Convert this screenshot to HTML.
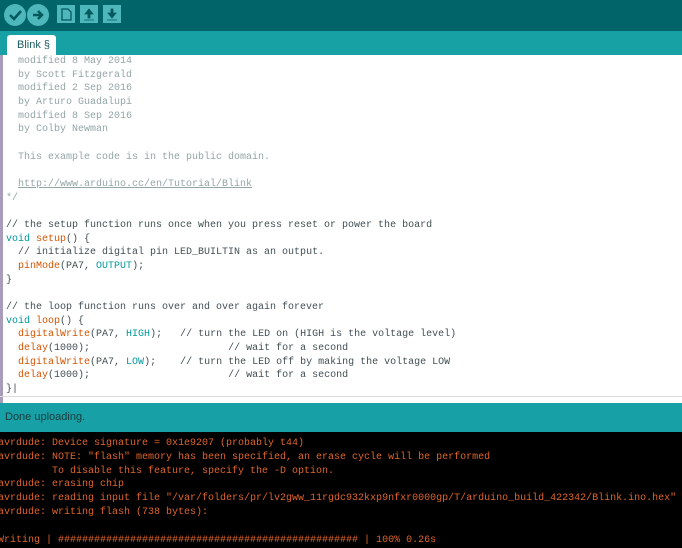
<!DOCTYPE html>
<html><head><style>
*{margin:0;padding:0;box-sizing:border-box}
body{width:682px;height:548px;overflow:hidden;position:relative;background:#fff;font-family:"Liberation Mono",monospace}
#tb{position:absolute;left:0;top:0;width:682px;height:31px;background:#006468}
.rb{position:absolute;top:4px;width:22px;height:22px;border-radius:50%;background:#4db7bb}
.sq{position:absolute;top:5px;width:18px;height:18px;background:#4db7bb}
#tabs{position:absolute;left:0;top:31px;width:682px;height:24px;background:#17a1a5}
#tab{position:absolute;left:7px;top:4px;width:49px;height:20px;background:#fff;border-radius:3px 3px 0 0;font:11px "Liberation Sans",sans-serif;color:#1d5d61;padding:4px 0 0 10px}
#strip{position:absolute;left:0;top:55px;width:3px;height:349px;background:#a89cba}
#code{position:absolute;left:6px;top:55px;font-size:10px;line-height:13.67px;white-space:pre;color:#434f54}
.h{color:#95a5a6}.k{color:#00979c}.f{color:#d35400}.c{color:#434f54}
#sep{position:absolute;left:0;top:396px;width:682px;height:1px;background:#ddd}
#st{position:absolute;left:0;top:403px;width:682px;height:29px;background:#17a0a5;font:11px "Liberation Sans",sans-serif;color:#1b3b3d;padding:8px 0 0 5px}
#con{position:absolute;left:0;top:432px;width:682px;height:116px;background:#000}
#ct{position:absolute;left:-2px;top:437px;font-size:10px;line-height:13.8px;white-space:pre;color:#e0652a}
</style></head><body>
<div id="tb">
<div class="rb" style="left:4px"><svg width="22" height="22"><path d="M6 11l4 4 7-8" stroke="#00595d" stroke-width="2.5" fill="none"/></svg></div>
<div class="rb" style="left:27px"><svg width="22" height="22"><path d="M6 11h9M11 7l4 4-4 4" stroke="#00595d" stroke-width="2.5" fill="none"/></svg></div>
<div class="sq" style="left:57px"><svg width="18" height="18"><path d="M5 4h6l3 3v8H5z" stroke="#00595d" stroke-width="1.3" fill="none"/></svg></div>
<div class="sq" style="left:80px"><svg width="18" height="18"><path d="M9 4l-4 5h3v4h2V9h3z M4 15h10" fill="#00595d" stroke="#00595d" stroke-width="0.8"/></svg></div>
<div class="sq" style="left:103px"><svg width="18" height="18"><path d="M9 13l-4-5h3V4h2v4h3z M4 15h10" fill="#00595d" stroke="#00595d" stroke-width="0.8"/></svg></div>
</div>
<div id="tabs"><div id="tab">Blink §</div></div>
<div id="strip"></div>
<div id="code"><span class="h">  modified 8 May 2014
  by Scott Fitzgerald
  modified 2 Sep 2016
  by Arturo Guadalupi
  modified 8 Sep 2016
  by Colby Newman

  This example code is in the public domain.

  <u>http://www.arduino.cc/en/Tutorial/Blink</u>
*/</span>

<span class="c">// the setup function runs once when you press reset or power the board</span>
<span class="k">void</span> <span class="f">setup</span>() {
  <span class="c">// initialize digital pin LED_BUILTIN as an output.</span>
  <span class="f">pinMode</span>(PA7, <span class="k">OUTPUT</span>);
}

<span class="c">// the loop function runs over and over again forever</span>
<span class="k">void</span> <span class="f">loop</span>() {
  <span class="f">digitalWrite</span>(PA7, <span class="k">HIGH</span>);   <span class="c">// turn the LED on (HIGH is the voltage level)</span>
  <span class="f">delay</span>(1000);                       <span class="c">// wait for a second</span>
  <span class="f">digitalWrite</span>(PA7, <span class="k">LOW</span>);    <span class="c">// turn the LED off by making the voltage LOW</span>
  <span class="f">delay</span>(1000);                       <span class="c">// wait for a second</span>
}|</div>
<div id="sep"></div>
<div id="st">Done uploading.</div>
<div id="con"></div>
<div id="ct">avrdude: Device signature = 0x1e9207 (probably t44)
avrdude: NOTE: "flash" memory has been specified, an erase cycle will be performed
         To disable this feature, specify the -D option.
avrdude: erasing chip
avrdude: reading input file "/var/folders/pr/lv2gww_11rgdc932kxp9nfxr0000gp/T/arduino_build_422342/Blink.ino.hex"
avrdude: writing flash (738 bytes):

Writing | ################################################## | 100% 0.26s</div>
</body></html>
